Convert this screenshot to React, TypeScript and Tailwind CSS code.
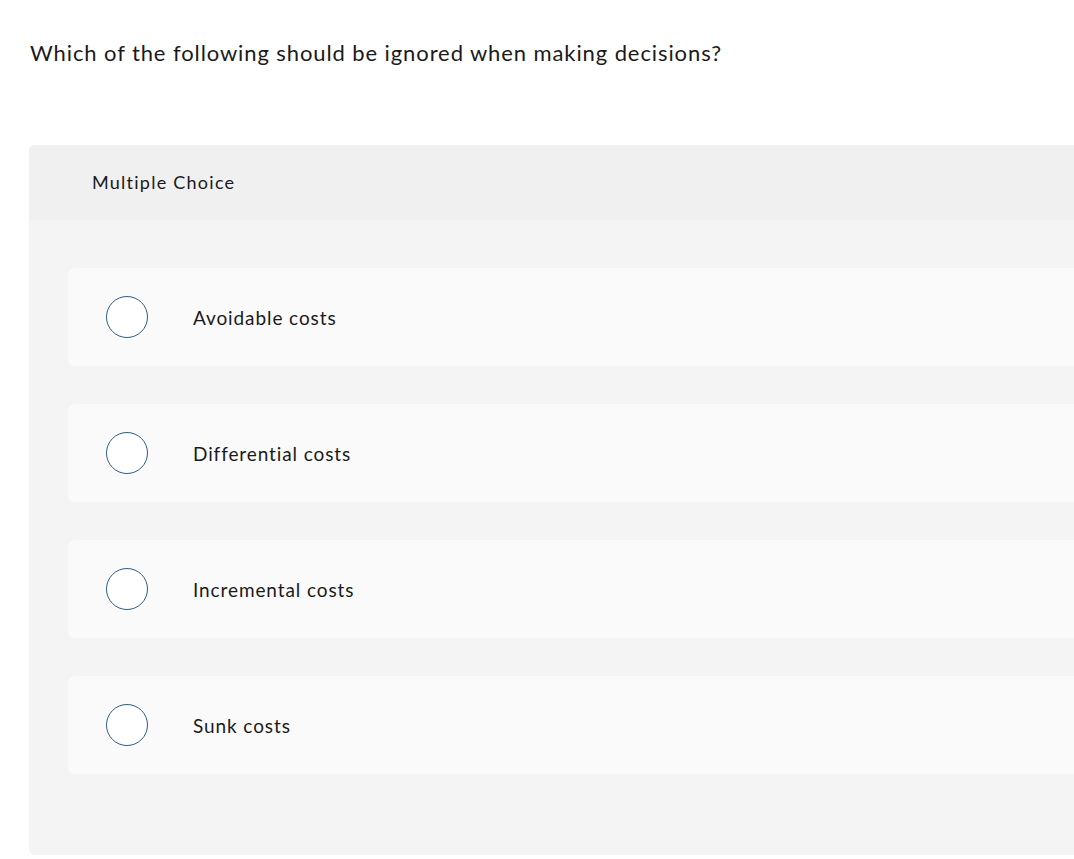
import React from "react";

const options = ["Avoidable costs", "Differential costs", "Incremental costs", "Sunk costs"];

export default function App() {
  return (
    <div className="w-[1074px] h-[859px] overflow-hidden bg-white text-[#1a1a1a]" style={{ fontFamily: "Lato, 'Open Sans', sans-serif" }}>
      <div className="pt-[38px] pl-[30px] text-[22px] leading-[30px] tracking-[0.9px]">
        Which of the following should be ignored when making decisions?
      </div>
      <div className="ml-[29px] mt-[77px] w-[1100px] rounded-[6px] overflow-hidden bg-[#f4f4f4]">
        <div className="h-[75px] bg-[#f0f0f0] flex items-center pl-[63px] text-[18px] tracking-[1.25px]">
          Multiple Choice
        </div>
        <div className="pl-[39px] pt-[48px] pb-[81px] flex flex-col gap-[38px]">
          {options.map((o) => (
            <div key={o} className="h-[98px] rounded-[6px] bg-[#fafafa] flex items-center pl-[38px]">
              <div className="w-[42px] h-[42px] rounded-full border-[1.5px] border-[#2c5d8e] bg-white shrink-0" />
              <div className="ml-[45px] text-[19px] tracking-[0.9px] pt-[2px]">{o}</div>
            </div>
          ))}
        </div>
      </div>
    </div>
  );
}
